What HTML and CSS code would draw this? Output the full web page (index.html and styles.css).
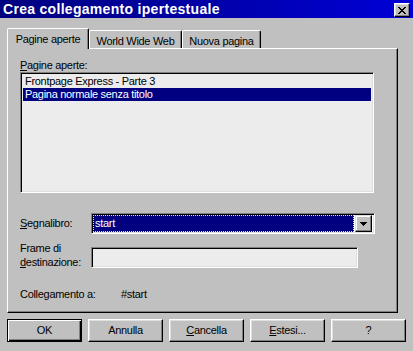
FILE: index.html
```html
<!DOCTYPE html>
<html lang="it">
<head>
<meta charset="utf-8">
<title>Crea collegamento ipertestuale</title>
<link rel="stylesheet" href="styles.css">
</head>
<body>
<div class="window">
  <div class="titlebar">
    <span class="title">Crea collegamento ipertestuale</span>
    <span class="close">
      <svg width="8" height="7" viewBox="0 0 8 7" shape-rendering="crispEdges">
        <path d="M0 0h2v1h-2zM6 0h2v1h-2zM1 1h2v1h-2zM5 1h2v1h-2zM2 2h4v1h-4zM3 3h2v1h-2zM2 4h4v1h-4zM1 5h2v1h-2zM5 5h2v1h-2zM0 6h2v1h-2zM6 6h2v1h-2z" fill="#000"/>
      </svg>
    </span>
  </div>
  <div class="body">
    <div class="tabs">
      <div class="tab active">Pagine aperte</div>
      <div class="tab t2">World Wide Web</div>
      <div class="tab t3">Nuova pagina</div>
    </div>
    <div class="panel">
      <div class="label"><u>P</u>agine aperte:</div>
      <div class="listbox">
        <div class="item">Frontpage Express - Parte 3</div>
        <div class="item selected">Pagina normale senza titolo</div>
      </div>
      <div class="row seg">
        <div class="rlabel"><u>S</u>egnalibro:</div>
        <div class="combo">
          <div class="combo-value">start</div>
          <div class="combo-btn">
            <svg width="7" height="4" viewBox="0 0 7 4" shape-rendering="crispEdges">
              <path d="M0 0h7v1h-7zM1 1h5v1h-5zM2 2h3v1h-3zM3 3h1v1h-1z" fill="#000"/>
            </svg>
          </div>
        </div>
      </div>
      <div class="row frame">
        <div class="rlabel two">Frame di<br><u>d</u>estinazione:</div>
        <div class="field"></div>
      </div>
      <div class="row link">
        <div class="rlabel wide">Collegamento a:</div>
        <div class="value">#start</div>
      </div>
    </div>
    <div class="buttons">
      <div class="btn default">OK</div>
      <div class="btn">Annulla</div>
      <div class="btn"><span><u>C</u>ancella</span></div>
      <div class="btn"><span><u>E</u>stesi...</span></div>
      <div class="btn">?</div>
    </div>
  </div>
</div>
</body>
</html>
```

FILE: styles.css
```css
html, body {
  margin: 0;
  padding: 0;
}
body {
  background: #c0c0c0;
  font-family: "Liberation Sans", Arial, sans-serif;
  font-size: 11px;
  line-height: 13px;
  letter-spacing: -0.3px;
  color: #000;
  width: 413px;
  height: 351px;
  overflow: hidden;
}
u {
  text-decoration: underline;
  text-underline-offset: 1px;
}

.titlebar {
  height: 18px;
  display: flex;
  justify-content: space-between;
  align-items: flex-start;
  background: linear-gradient(90deg, #000080 0%, #0000a8 50%, #0000d8 100%);
}
.title {
  color: #fff;
  font-weight: bold;
  font-size: 14px;
  line-height: 18px;
  padding-left: 3px;
  letter-spacing: 0.3px;
}
.close {
  margin-top: 3px;
  margin-right: 3px;
  width: 16px;
  height: 14px;
  box-sizing: border-box;
  background: #c0c0c0;
  border: 1px solid;
  border-color: #fff #000 #000 #fff;
  box-shadow: inset -1px -1px #808080, inset 1px 1px #dfdfdf;
  display: flex;
  align-items: center;
  justify-content: center;
}
.close svg { display: block; }

.body {
  padding: 10px 0 0 7px;
}

.tabs {
  display: flex;
  align-items: flex-end;
  height: 20px;
  position: relative;
  z-index: 2;
}
.tab {
  box-sizing: border-box;
  height: 18px;
  border-top: 1px solid #fff;
  border-left: 1px solid #fff;
  border-right: 1px solid #000;
  border-radius: 2px 2px 0 0;
  box-shadow: inset -1px 0 #808080;
  text-align: center;
  padding-top: 4px;
  background: #c0c0c0;
}
.tab.active {
  width: 82px;
  height: 21px;
  margin-bottom: -1px;
  padding-top: 4px;
}
.tab.t2 {
  width: 93px;
}
.tab.t3 {
  width: 79px;
}

.panel {
  box-sizing: border-box;
  width: 391px;
  height: 265px;
  border: 1px solid;
  border-color: #fff #000 #000 #fff;
  box-shadow: inset -1px -1px #808080;
  padding: 10px 0 0 12px;
  display: flex;
  flex-direction: column;
  align-items: flex-start;
  position: relative;
  z-index: 1;
}

.label {
  height: 13px;
}
.listbox {
  box-sizing: border-box;
  width: 354px;
  height: 121px;
  border: 1px solid;
  border-color: #808080 #fff #fff #808080;
  box-shadow: inset 1px 1px #000, inset -1px -1px #dfdfdf;
  background: #ececec;
  padding: 2px 2px 0 2px;
}
.item {
  height: 13px;
  padding-left: 2px;
  white-space: nowrap;
}
.item.selected {
  background: #000080;
  color: #fff;
}

.row {
  display: flex;
  align-items: flex-start;
}
.rlabel {
  width: 71px;
  flex: none;
}
.rlabel.two {
  line-height: 14px;
}
.rlabel.wide {
  width: 101px;
}

.seg {
  margin-top: 20px;
  align-items: center;
}
.combo {
  box-sizing: border-box;
  width: 284px;
  height: 21px;
  border: 1px solid;
  border-color: #808080 #fff #fff #808080;
  box-shadow: inset 1px 1px #000, inset -1px -1px #dfdfdf;
  padding: 1px 2px 1px 1px;
  display: flex;
  background: #fff;
}
.combo-value {
  flex: 1;
  background: #000080;
  color: #fff;
  border: 1px dotted #ffff00;
  padding-left: 1px;
  line-height: 15px;
  margin-right: 1px;
}
.combo-btn {
  box-sizing: border-box;
  width: 17px;
  height: 17px;
  background: #c0c0c0;
  border: 1px solid;
  border-color: #dfdfdf #000 #000 #dfdfdf;
  box-shadow: inset -1px -1px #808080, inset 1px 1px #fff;
  display: flex;
  align-items: center;
  justify-content: center;
}
.combo-btn svg { display: block; }

.frame {
  margin-top: 7px;
}
.field {
  box-sizing: border-box;
  margin-top: 6px;
  width: 267px;
  height: 21px;
  border: 1px solid;
  border-color: #808080 #fff #fff #808080;
  box-shadow: inset 1px 1px #000, inset -1px -1px #dfdfdf;
  background: #ececec;
}

.link {
  margin-top: 19px;
}

.buttons {
  display: flex;
  gap: 6px;
  margin-top: 6px;
}
.btn {
  box-sizing: border-box;
  width: 75px;
  height: 23px;
  border: 1px solid;
  border-color: #fff #000 #000 #fff;
  box-shadow: inset -1px -1px #808080, inset 1px 1px #dfdfdf;
  display: flex;
  align-items: center;
  justify-content: center;
}
.btn.default {
  border-color: #000;
  box-shadow: inset 1px 1px #fff, inset -1px -1px #000, inset -2px -2px #808080;
}
```
